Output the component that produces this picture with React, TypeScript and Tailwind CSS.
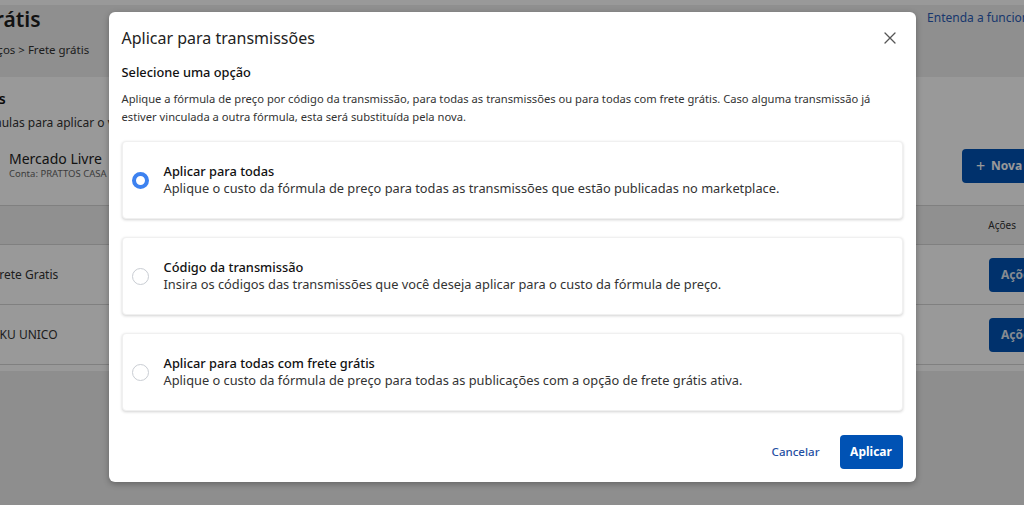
import React from "react";

const font = { fontFamily: '"Noto Sans", "Open Sans", sans-serif' };

function Radio({ checked }: { checked?: boolean }) {
  return checked ? (
    <span className="block h-[17px] w-[17px] shrink-0 rounded-full border-[4px] border-[#3d82f0] bg-white" />
  ) : (
    <span className="block h-[17px] w-[17px] shrink-0 rounded-full border border-[#c9cdd3] bg-white" />
  );
}

function Option({ title, desc, checked }: { title: string; desc: string; checked?: boolean }) {
  return (
    <div className="flex h-[78px] items-center gap-[15px] rounded-[4px] border border-[#f0f0f0] bg-white pl-[9px] shadow-[0_1px_3px_rgba(0,0,0,0.18)]">
      <Radio checked={checked} />
      <div className="flex flex-col">
        <span className="text-[12.8px] font-medium leading-[17px] text-[#111]">{title}</span>
        <span className="text-[12.8px] leading-[17px] text-[#333]">{desc}</span>
      </div>
    </div>
  );
}

export default function App() {
  return (
    <div className="relative h-[505px] w-[1024px] overflow-hidden bg-[#ededed]" style={font}>
      {/* underlying page */}
      <div className="flex h-full flex-col">
        <div className="h-[5px] bg-[#ffffff]" />
        <div className="flex h-[72px] justify-between bg-[#eeeeee]">
          <div className="flex flex-col">
            <span className="-ml-[77px] text-[21px] font-semibold leading-[28px] text-[#1f1f1f]">Frete grátis</span>
            <span className="-ml-[29px] mt-[9px] text-[11.5px] leading-[16px] text-[#333]">Serviços &gt; Frete grátis</span>
          </div>
          <span className="mr-[-49px] pt-[4px] text-[12px] text-[#2b5db8]">Entenda a funcionamento</span>
        </div>
        <div className="flex flex-col bg-white">
          <div className="flex items-start justify-between">
            <div className="flex flex-col pt-[13px]">
              <span className="-ml-[58px] text-[14px] font-semibold leading-[18px] text-[#111]">Fórmulas</span>
              <span className="-ml-[28px] mt-[7px] text-[12px] leading-[16px] text-[#333]">Fórmulas para aplicar o valor</span>
              <div className="ml-[9px] mt-[19px] flex flex-col">
                <span className="text-[14px] leading-[18px] text-[#222]">Mercado Livre</span>
                <span className="text-[9.5px] leading-[12px] text-[#666]">Conta: PRATTOS CASA</span>
              </div>
            </div>
            <div className="mr-[-63px] mt-[72px] flex h-[34px] items-center gap-[6px] rounded-[4px] bg-[#0052b4] px-[14px] text-[12px] font-bold text-white">
              <span className="text-[16px] font-normal">+</span>
              <span>Nova fórmula</span>
            </div>
          </div>
          <div className="mt-[22px] flex h-[40px] items-center justify-end border-y border-[#d6d6d6] bg-[#f0f0f0] pr-[8px]">
            <span className="text-[10px] text-[#333]">Ações</span>
          </div>
          <div className="flex h-[60px] items-center justify-between border-b border-[#d6d6d6]">
            <span className="-ml-[7px] text-[12px] text-[#333]">Frete Gratis</span>
            <span className="mr-[-30px] flex h-[34px] w-[65px] items-center rounded-[4px] bg-[#0052b4] pl-[12px] text-[12px] font-bold text-[#dfe6f2]">Ações</span>
          </div>
          <div className="flex h-[60px] items-center justify-between border-b border-[#d6d6d6]">
            <span className="-ml-[7px] text-[12px] text-[#333]">SKU UNICO</span>
            <span className="mr-[-30px] flex h-[34px] w-[65px] items-center rounded-[4px] bg-[#0052b4] pl-[12px] text-[12px] font-bold text-[#dfe6f2]">Ações</span>
          </div>
          <div className="h-[6px]" />
        </div>
      </div>

      {/* overlay */}
      <div className="absolute inset-0 flex justify-center bg-black/40 pt-[12px]">
        <div className="flex h-[470px] w-[807px] flex-col rounded-[6px] bg-white px-[13px] pt-[14px] shadow-[0_2px_6px_rgba(0,0,0,0.3)]">
          <div className="flex items-center justify-between">
            <span className="text-[16px] leading-[24px] text-[#222]">Aplicar para transmissões</span>
            <svg width="12" height="12" viewBox="0 0 12 12" className="mr-[7px]" fill="none" stroke="#555" strokeWidth="1.3" strokeLinecap="round">
              <path d="M1 1L11 11M11 1L1 11" />
            </svg>
          </div>
          <span className="mt-[12px] text-[12.8px] font-medium leading-[20px] text-[#111]">Selecione uma opção</span>
          <p className="mt-[8px] text-[11.2px] leading-[17.5px] text-[#333]">
            Aplique a fórmula de preço por código da transmissão, para todas as transmissões ou para todas com frete grátis. Caso alguma transmissão já estiver vinculada a outra fórmula, esta será substituída pela nova.
          </p>
          <div className="mt-[16px] flex flex-col gap-[18px]">
            <Option
              checked
              title="Aplicar para todas"
              desc="Aplique o custo da fórmula de preço para todas as transmissões que estão publicadas no marketplace."
            />
            <Option
              title="Código da transmissão"
              desc="Insira os códigos das transmissões que você deseja aplicar para o custo da fórmula de preço."
            />
            <Option
              title="Aplicar para todas com frete grátis"
              desc="Aplique o custo da fórmula de preço para todas as publicações com a opção de frete grátis ativa."
            />
          </div>
          <div className="mt-[24px] flex items-center justify-end gap-[20px]">
            <span className="text-[11.5px] font-medium text-[#1f4fa3]">Cancelar</span>
            <span className="flex h-[34px] w-[63px] items-center justify-center rounded-[4px] bg-[#0052b4] text-[12px] font-bold text-white">Aplicar</span>
          </div>
        </div>
      </div>
    </div>
  );
}
